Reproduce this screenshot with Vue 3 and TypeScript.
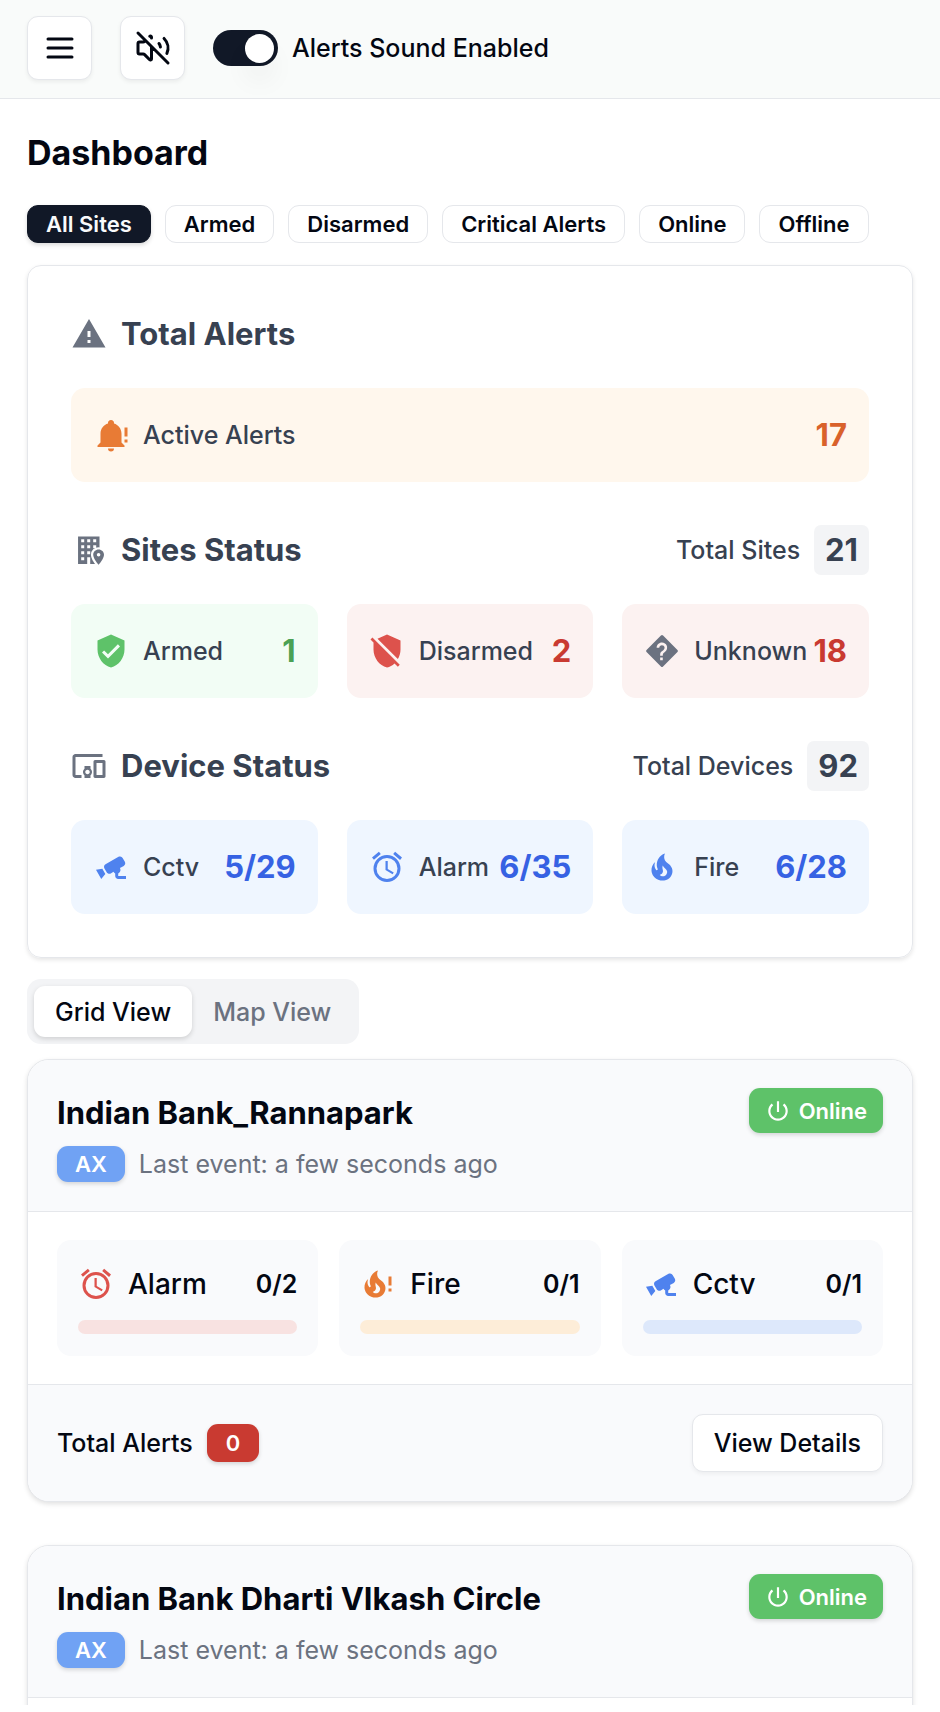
<script setup lang="ts">
import { ref } from 'vue'

type Tone = 'orange' | 'green' | 'red' | 'unknown' | 'blue'

interface Stat {
  label: string
  value: string
  icon: string
  tone: Tone
}

interface Device {
  label: string
  value: string
  icon: string
  tone: 'red' | 'orange' | 'blue'
  percent: number
}

interface Site {
  name: string
  panel: string
  lastEvent: string
  alerts: number
  devices: Device[]
}

const icons: Record<string, string> = {
  warning: 'M1 21h22L12 2 1 21zm12-3h-2v-2h2v2zm0-4h-2v-4h2v4z',
  bell: 'M23 7v6h-2V7h2zm0 8v2h-2v-2h2zM12 2A2 2 0 0 0 10 4.29C7.12 5.14 5 7.82 5 11v6l-2 2v1h18v-1l-2-2v-6c0-3.18-2.12-5.86-5-6.71A2 2 0 0 0 12 2zM10 21a2 2 0 0 0 4 0h-4z',
  shieldCheck:
    'M10 17l-4-4 1.41-1.41L10 14.17l6.59-6.59L18 9M12 1L3 5v6c0 5.55 3.84 10.74 9 12 5.16-1.26 9-6.45 9-12V5l-9-4z',
  shieldOff:
    'M1 4.27L2.28 3 20.5 21.22 19.23 22.5 17 20.25C15.57 21.57 13.87 22.54 12 23 6.84 21.74 3 16.55 3 11V6.27L1 4.27M12 1l9 4v6c0 2.28-.65 4.5-1.77 6.41L5.65 3.82 12 1z',
  devices:
    'M3 6h18V4H3c-1.1 0-2 .9-2 2v12c0 1.1.9 2 2 2h4v-2H3V6zm10 6H9v1.78c-.61.55-1 1.33-1 2.22s.39 1.67 1 2.22V20h4v-1.78c.61-.55 1-1.34 1-2.22s-.39-1.67-1-2.22V12zm-2 5.5c-.83 0-1.5-.67-1.5-1.5s.67-1.5 1.5-1.5 1.5.67 1.5 1.5-.67 1.5-1.5 1.5zM22 8h-6c-.5 0-1 .5-1 1v10c0 .5.5 1 1 1h6c.5 0 1-.5 1-1V9c0-.5-.5-1-1-1zm-1 10h-4v-8h4v8z',
  cctv: 'M18.15 4.94C17.77 4.91 17.37 5 17 5.2L8.35 10.2C7.39 10.76 7.07 12 7.62 12.94L9.12 15.53C9.67 16.5 10.89 16.82 11.85 16.27L13.65 15.23C13.92 15.69 14.32 16.06 14.81 16.27V18.04C14.81 19.13 15.7 20 16.81 20H22V18.04H16.81V16.27C17.72 15.87 18.31 14.97 18.31 14C18.31 13.54 18.19 13.11 17.97 12.73L20.5 11.27C21.47 10.71 21.8 9.5 21.24 8.53L19.74 5.94C19.4 5.34 18.79 5 18.15 4.94M6.22 13.17L2 13.87 2.75 15.17 4.75 18.63 5.5 19.93 8.22 16.63 6.22 13.17Z',
  alarm:
    'M12 20A7 7 0 0 1 5 13 7 7 0 0 1 12 6 7 7 0 0 1 19 13 7 7 0 0 1 12 20M12 4A9 9 0 0 0 3 13 9 9 0 0 0 12 22 9 9 0 0 0 21 13 9 9 0 0 0 12 4M12.5 8H11V14L15.75 16.85 16.5 15.62 12.5 13.25V8M7.88 3.39L6.6 1.86 2 5.71 3.29 7.24 7.88 3.39M22 5.72L17.4 1.86 16.11 3.39 20.71 7.25 22 5.72Z',
  fire: 'M17.66 11.2C17.43 10.9 17.15 10.64 16.89 10.38 16.22 9.78 15.46 9.35 14.82 8.72 13.33 7.26 13 4.85 13.95 3 13 3.23 12.17 3.75 11.46 4.32 8.87 6.4 7.85 10.07 9.07 13.22 9.11 13.32 9.15 13.42 9.15 13.55 9.15 13.77 9 13.97 8.8 14.05 8.57 14.15 8.33 14.09 8.14 13.93 8.08 13.88 8.04 13.83 8 13.76 6.87 12.33 6.69 10.28 7.45 8.64 5.78 10 4.87 12.3 5 14.47 5.06 14.97 5.12 15.47 5.29 15.97 5.43 16.57 5.7 17.17 6 17.7 7.08 19.43 8.95 20.67 10.96 20.92 13.1 21.19 15.39 20.8 17.03 19.32 18.86 17.66 19.5 15 18.56 12.72L18.43 12.46C18.22 12 17.66 11.2 17.66 11.2M14.5 17.5C14.22 17.74 13.76 18 13.4 18.1 12.28 18.5 11.16 17.94 10.5 17.28 11.69 17 12.4 16.12 12.61 15.23 12.78 14.43 12.46 13.77 12.33 13 12.21 12.26 12.23 11.63 12.5 10.94 12.69 11.32 12.89 11.7 13.13 12 13.9 13 15.11 13.44 15.37 14.8 15.41 14.94 15.43 15.08 15.43 15.23 15.46 16.05 15.1 16.95 14.5 17.5Z',
  power:
    'M13 3h-2v10h2V3zm4.83 2.17l-1.42 1.42C17.99 7.86 19 9.81 19 12c0 3.87-3.13 7-7 7s-7-3.13-7-7c0-2.19 1.01-4.14 2.58-5.42L6.17 5.17C4.23 6.82 3 9.26 3 12c0 4.97 4.03 9 9 9s9-4.03 9-9c0-2.74-1.23-5.18-3.17-6.83z',
}

const filters = ['All Sites', 'Armed', 'Disarmed', 'Critical Alerts', 'Online', 'Offline']
const activeFilter = ref('All Sites')
const views = ['Grid View', 'Map View']
const activeView = ref('Grid View')
const soundEnabled = ref(true)

const siteStats: Stat[] = [
  { label: 'Armed', value: '1', icon: 'shieldCheck', tone: 'green' },
  { label: 'Disarmed', value: '2', icon: 'shieldOff', tone: 'red' },
  { label: 'Unknown', value: '18', icon: 'unknown', tone: 'unknown' },
]

const deviceStats: Stat[] = [
  { label: 'Cctv', value: '5/29', icon: 'cctv', tone: 'blue' },
  { label: 'Alarm', value: '6/35', icon: 'alarm', tone: 'blue' },
  { label: 'Fire', value: '6/28', icon: 'fire', tone: 'blue' },
]

const groups = [
  { title: 'Sites Status', icon: 'building', totalLabel: 'Total Sites', total: 21, stats: siteStats },
  { title: 'Device Status', icon: 'devices', totalLabel: 'Total Devices', total: 92, stats: deviceStats },
]

const siteDevices = (): Device[] => [
  { label: 'Alarm', value: '0/2', icon: 'alarm', tone: 'red', percent: 0 },
  { label: 'Fire', value: '0/1', icon: 'fireAlert', tone: 'orange', percent: 0 },
  { label: 'Cctv', value: '0/1', icon: 'cctv', tone: 'blue', percent: 0 },
]

const sites: Site[] = [
  { name: 'Indian Bank_Rannapark', panel: 'AX', lastEvent: 'a few seconds ago', alerts: 0, devices: siteDevices() },
  { name: 'Indian Bank Dharti VIkash Circle', panel: 'AX', lastEvent: 'a few seconds ago', alerts: 0, devices: siteDevices() },
]
</script>

<template>
  <div class="app">
    <div class="scroller">
      <header class="topbar">
        <button type="button" class="icon-button" aria-label="Open menu">
          <svg class="icon line" viewBox="0 0 24 24" aria-hidden="true">
            <path d="M4 6h16M4 12h16M4 18h16" />
          </svg>
        </button>
        <button type="button" class="icon-button" aria-label="Mute alerts">
          <svg class="icon line" viewBox="0 0 24 24" aria-hidden="true">
            <path d="M16 9a5 5 0 0 1 .95 2.293M19.364 5.636a9 9 0 0 1 1.889 9.96M2 2l20 20M7 7l-.587.587A1.4 1.4 0 0 1 5.416 8H3a1 1 0 0 0-1 1v6a1 1 0 0 0 1 1h2.416a1.4 1.4 0 0 1 .997.413l3.383 3.384A.705.705 0 0 0 11 19.298V11M9.828 4.172A.686.686 0 0 1 11 4.657v.686" />
          </svg>
        </button>
        <div class="sound">
          <input id="sound" v-model="soundEnabled" class="switch" type="checkbox" role="switch" />
          <label for="sound">Alerts Sound Enabled</label>
        </div>
      </header>

      <main class="page">
        <h1>Dashboard</h1>

        <div class="filters">
          <button
            v-for="f in filters"
            :key="f"
            type="button"
            class="chip"
            :class="{ active: f === activeFilter }"
            :aria-pressed="f === activeFilter"
            @click="activeFilter = f"
          >{{ f }}</button>
        </div>

        <section class="summary">
          <div class="group">
            <div class="group-head">
              <svg class="icon gray" viewBox="0 0 24 24" aria-hidden="true"><path :d="icons.warning" /></svg>
              <h2>Total Alerts</h2>
            </div>
            <div class="stat orange">
              <svg class="icon" viewBox="0 0 24 24" aria-hidden="true"><path :d="icons.bell" /></svg>
              <span class="stat-label">Active Alerts</span>
              <strong>17</strong>
            </div>
          </div>

          <div v-for="g in groups" :key="g.title" class="group">
            <div class="group-head">
              <svg class="icon gray" viewBox="0 0 24 24" aria-hidden="true">
                <template v-if="g.icon === 'building'">
                  <path fill-rule="evenodd" d="M4.7 3h14.3v18.4H4.7zM6.8 4.9v2h2v-2zM10.8 4.9v2h2v-2zM14.8 4.9v2h2v-2zM6.8 8.9v2h2v-2zM10.8 8.9v2h2v-2zM14.8 8.9v2h2v-2zM6.8 12.9v2h2v-2zM10.8 12.9v2h2v-2zM6.8 16.9v2h2v-2zM10.8 16.9v4.5h2v-4.5z" />
                  <path class="halo" d="M18.4 11.6c-2 0-3.6 1.6-3.6 3.5 0 2.7 3.6 6.7 3.6 6.7s3.6-4 3.6-6.7c0-1.9-1.6-3.5-3.6-3.5z" />
                  <path fill-rule="evenodd" d="M18.4 11.6c-2 0-3.6 1.6-3.6 3.5 0 2.7 3.6 6.7 3.6 6.7s3.6-4 3.6-6.7c0-1.9-1.6-3.5-3.6-3.5zm0 4.8a1.2 1.2 0 1 1 0-2.4 1.2 1.2 0 0 1 0 2.4z" />
                </template>
                <path v-else :d="icons[g.icon]" />
              </svg>
              <h2>{{ g.title }}</h2>
              <div class="total">
                <span>{{ g.totalLabel }}</span>
                <strong>{{ g.total }}</strong>
              </div>
            </div>
            <div class="stats">
              <div v-for="s in g.stats" :key="s.label" class="stat" :class="s.tone">
                <svg class="icon" viewBox="0 0 24 24" aria-hidden="true">
                  <template v-if="s.icon === 'unknown'">
                    <path class="rhombus" d="M12 2.4L21.6 12 12 21.6 2.4 12z" />
                    <path class="mark" transform="translate(-2.1 -1.8) scale(1.17)" d="M12 6.95C14.7 7.06 15.87 9.78 14.28 11.81C13.86 12.31 13.19 12.64 12.85 13.07C12.5 13.5 12.5 14 12.5 14.5H11C11 13.65 11 12.94 11.35 12.44C11.68 11.94 12.35 11.64 12.77 11.31C14 10.18 13.68 8.59 12 8.46C11.18 8.46 10.5 9.13 10.5 9.97H9C9 8.3 10.35 6.95 12 6.95M11 15.5H12.5V17H11V15.5Z" />
                  </template>
                  <path v-else :d="icons[s.icon]" />
                </svg>
                <span class="stat-label">{{ s.label }}</span>
                <strong>{{ s.value }}</strong>
              </div>
            </div>
          </div>
        </section>

        <div class="tabs" role="tablist">
          <button
            v-for="v in views"
            :key="v"
            type="button"
            role="tab"
            class="tab"
            :aria-selected="v === activeView"
            :class="{ active: v === activeView }"
            @click="activeView = v"
          >{{ v }}</button>
        </div>

        <div class="sites">
          <article v-for="site in sites" :key="site.name" class="site">
            <header class="site-head">
              <div class="site-info">
                <h3>{{ site.name }}</h3>
                <div class="site-meta">
                  <span class="badge panel">{{ site.panel }}</span>
                  <span class="event">Last event: {{ site.lastEvent }}</span>
                </div>
              </div>
              <span class="badge online">
                <svg class="power" viewBox="0 0 24 24" aria-hidden="true"><path :d="icons.power" /></svg>
                Online
              </span>
            </header>

            <div class="site-body">
              <div v-for="d in site.devices" :key="d.label" class="device" :class="d.tone">
                <div class="device-row">
                  <svg class="icon" viewBox="0 0 24 24" aria-hidden="true">
                    <template v-if="d.icon === 'fireAlert'">
                      <path transform="translate(-2 0)" :d="icons.fire" />
                      <path d="M19 7h2v6h-2zM19 15h2v2h-2z" />
                    </template>
                    <path v-else :d="icons[d.icon]" />
                  </svg>
                  <span class="device-name">{{ d.label }}</span>
                  <span class="device-value">{{ d.value }}</span>
                </div>
                <div class="track"><div class="fill" :style="{ width: d.percent + '%' }"></div></div>
              </div>
            </div>

            <footer class="site-foot">
              <span class="foot-label">Total Alerts</span>
              <span class="badge count">{{ site.alerts }}</span>
              <button type="button" class="details">View Details</button>
            </footer>
          </article>
        </div>
      </main>
    </div>
  </div>
</template>

<style>
body {
  margin: 0;
  background: #fff;
}
</style>

<style scoped>
.app,
.app * {
  box-sizing: border-box;
}

.app {
  height: 100vh;
  padding-bottom: 7px;
  font-family: Inter, "Liberation Sans", sans-serif;
  font-size: 25px;
  line-height: 36px;
  color: #030712;
}

.scroller {
  height: 100%;
  overflow-y: auto;
  scrollbar-width: none;
}

button {
  font: inherit;
  color: inherit;
  cursor: pointer;
}

h1,
h2,
h3 {
  margin: 0;
  font-weight: 700;
}

.icon {
  flex: none;
  width: 36px;
  height: 36px;
  fill: currentColor;
}

.icon.line {
  fill: none;
  stroke: currentColor;
  stroke-width: 2;
  stroke-linecap: round;
  stroke-linejoin: round;
}

.icon.gray {
  color: #6b7280;
}

.topbar {
  display: flex;
  align-items: center;
  gap: 28px;
  padding: 16px 27px 18px;
  border-bottom: 1px solid #e5e7eb;
  background: #f9fbfa;
}

.icon-button {
  display: grid;
  place-items: center;
  width: 65px;
  height: 64px;
  padding: 0;
  border: 1px solid #e5e7eb;
  border-radius: 11px;
  background: #fff;
  box-shadow: 0 2px 4px rgba(0, 0, 0, 0.06);
}

.sound {
  display: flex;
  align-items: center;
  gap: 14px;
  font-weight: 500;
}

.switch {
  appearance: none;
  display: flex;
  align-items: center;
  width: 65px;
  height: 36px;
  margin: 0;
  padding: 0 4px;
  border-radius: 18px;
  background: #e5e7eb;
  cursor: pointer;
}

.switch::before {
  content: "";
  width: 29px;
  height: 29px;
  border-radius: 50%;
  background: #fff;
  box-shadow: 0 18px 27px rgba(0, 0, 0, 0.05);
}

.switch:checked {
  justify-content: flex-end;
  background: #111827;
}

.page {
  padding: 29px 27px;
}

h1 {
  font-size: 34px;
  line-height: 50px;
}

.filters {
  display: flex;
  flex-wrap: wrap;
  gap: 14px;
  margin: 27px 0 22px;
}

.chip {
  height: 38px;
  padding: 0 18px;
  border: 1px solid #e5e7eb;
  border-radius: 11px;
  background: #fff;
  font-size: 22px;
  line-height: 28px;
  font-weight: 600;
}

.chip.active {
  border-color: #111827;
  background: #111827;
  color: #f9fafb;
  box-shadow: 0 2px 4px rgba(0, 0, 0, 0.15);
}

.summary {
  display: grid;
  gap: 43px;
  padding: 43px;
  border: 1px solid #e5e7eb;
  border-radius: 14px;
  box-shadow: 0 2px 4px rgba(0, 0, 0, 0.1);
  color: #374151;
}

.group {
  display: grid;
  gap: 29px;
}

.group-head {
  display: flex;
  align-items: center;
  gap: 14px;
  height: 50px;
}

h2 {
  font-size: 31px;
  line-height: 50px;
}

.halo {
  fill: #fff;
  stroke: #fff;
  stroke-width: 3;
}

.total {
  display: flex;
  align-items: center;
  gap: 14px;
  margin-left: auto;
  font-weight: 500;
}

.total strong {
  padding: 0 11px;
  border-radius: 7px;
  background: #f3f4f6;
  font-size: 31px;
  line-height: 50px;
  font-weight: 700;
}

.stats {
  display: grid;
  grid-template-columns: repeat(3, 1fr);
  gap: 29px;
}

.stat {
  display: flex;
  align-items: center;
  height: 94px;
  padding: 0 22px;
  border-radius: 14px;
  font-weight: 500;
}

.stat-label {
  margin-left: 14px;
  color: #374151;
}

.stat strong {
  margin-left: auto;
  font-size: 31px;
  line-height: 50px;
  font-weight: 700;
}

.stat.orange { background: #fff7ed; }
.stat.orange .icon { color: #e87b35; }
.stat.orange strong { color: #d9622b; }
.stat.green { background: #f2fdf5; }
.stat.green .icon { color: #5ec269; }
.stat.green strong { color: #4ba154; }
.stat.red,
.stat.unknown { background: #fcf2f1; }
.stat.red .icon { color: #dd524c; }
.stat.unknown .icon { color: #6b7280; }
.stat.red strong,
.stat.unknown strong { color: #c93a31; }
.stat.blue { background: #eff6ff; }
.stat.blue .icon { color: #4f82ee; }
.stat.blue strong { color: #3662e3; }

.rhombus {
  stroke: currentColor;
  stroke-width: 2;
  stroke-linejoin: round;
}

.mark {
  fill: #fcf2f1;
}

.tabs {
  display: flex;
  width: fit-content;
  margin: 21px 0 15px;
  padding: 7px;
  border-radius: 14px;
  background: #f3f4f6;
}

.tab {
  height: 51px;
  padding: 0 21px;
  border: 0;
  border-radius: 11px;
  background: none;
  font-weight: 500;
  color: #6b7280;
}

.tab.active {
  background: #fff;
  color: #030712;
  box-shadow: 0 2px 5px rgba(0, 0, 0, 0.15);
}

.sites {
  display: grid;
  gap: 43px;
}

.site {
  border: 1px solid #e5e7eb;
  border-radius: 22px;
  overflow: hidden;
  background: #fff;
  box-shadow: 0 2px 5px rgba(0, 0, 0, 0.12);
}

.site-head {
  display: flex;
  justify-content: space-between;
  align-items: flex-start;
  padding: 28px 29px 29px;
  border-bottom: 1px solid #e5e7eb;
  background: #f9fafc;
}

h3 {
  font-size: 31px;
  line-height: 50px;
}

.site-meta {
  display: flex;
  align-items: center;
  gap: 14px;
  margin-top: 8px;
}

.event {
  color: #6b7280;
}

.badge {
  display: flex;
  align-items: center;
  border-radius: 11px;
  font-size: 22px;
  line-height: 28px;
  font-weight: 600;
  color: #fff;
  box-shadow: 0 2px 4px rgba(0, 0, 0, 0.15);
}

.panel {
  height: 36px;
  padding: 0 18px;
  background: #70a2f4;
}

.online {
  gap: 8px;
  height: 45px;
  padding: 0 16px;
  background: #5ec269;
}

.power {
  width: 26px;
  height: 26px;
  fill: currentColor;
}

.count {
  height: 38px;
  padding: 0 19px;
  margin-left: 14px;
  background: #c93a31;
}

.site-body {
  display: grid;
  grid-template-columns: repeat(3, 1fr);
  gap: 21px;
  padding: 28px 29px;
}

.device {
  padding: 22px 21px;
  border-radius: 14px;
  background: #f9fafc;
}

.device-row {
  display: flex;
  align-items: center;
  height: 44px;
  margin-bottom: 14px;
}

.device-name {
  margin-left: 14px;
  font-size: 28px;
  font-weight: 500;
}

.device-value {
  margin-left: auto;
  font-weight: 600;
}

.track {
  height: 14px;
  border-radius: 7px;
  overflow: hidden;
}

.fill {
  height: 100%;
  background: currentColor;
}

.device.red .icon { color: #dd524c; }
.device.red .track { background: #f8e2e1; color: #dd524c; }
.device.orange .icon { color: #e87b35; }
.device.orange .track { background: #fdedd8; color: #e87b35; }
.device.blue .icon { color: #4f82ee; }
.device.blue .track { background: #dde8fb; color: #4f82ee; }

.site-foot {
  display: flex;
  align-items: center;
  padding: 29px;
  border-top: 1px solid #e5e7eb;
  background: #f9fafc;
}

.foot-label {
  font-weight: 500;
}

.details {
  height: 58px;
  margin-left: auto;
  padding: 0 21px;
  border: 1px solid #e5e7eb;
  border-radius: 11px;
  background: #fff;
  font-weight: 500;
  box-shadow: 0 2px 4px rgba(0, 0, 0, 0.05);
}
</style>
